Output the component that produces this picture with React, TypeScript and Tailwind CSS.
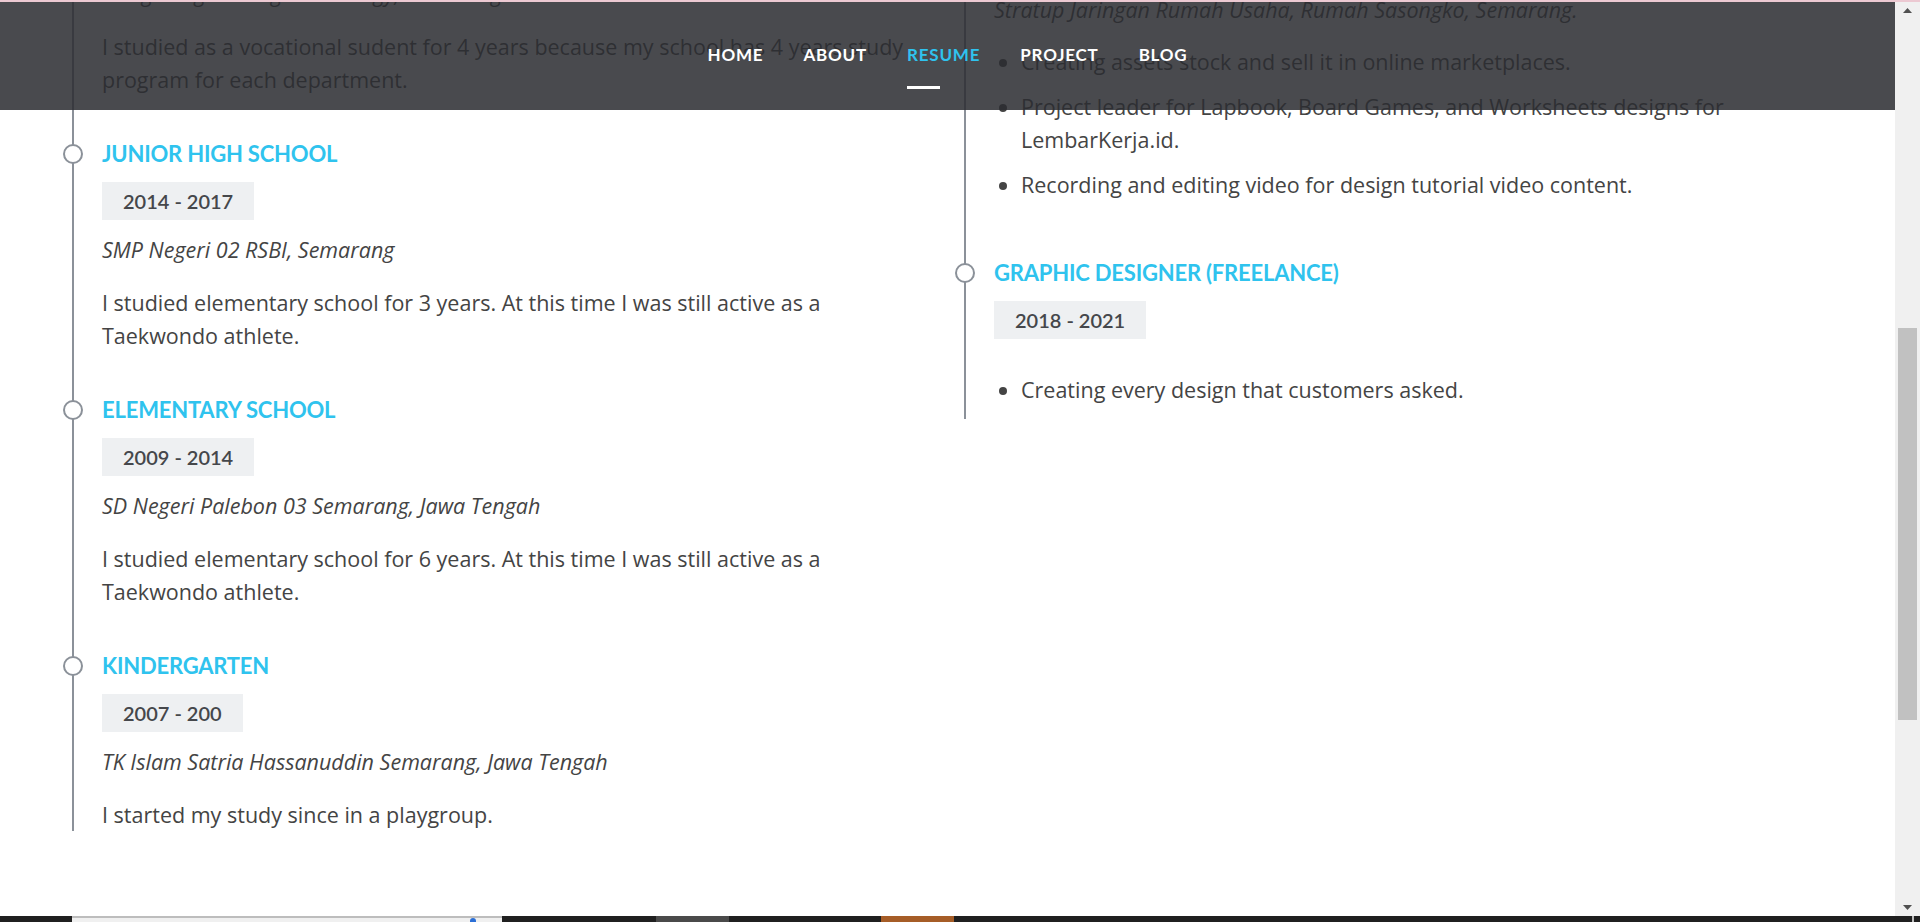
import type { JSX } from 'react';

// Resume timeline page, scrolled part-way, with the translucent fixed header on top.

const BODY_FONT = 'font-["Open_Sans","Liberation_Sans",sans-serif]';

type Item = {
  title: string;
  years: string;
  place: string;
  text: string;
};

const EDUCATION: Item[] = [
  {
    title: 'Junior High School',
    years: '2014 - 2017',
    place: 'SMP Negeri 02 RSBI, Semarang',
    text: 'I studied elementary school for 3 years. At this time I was still active as a Taekwondo athlete.',
  },
  {
    title: 'Elementary School',
    years: '2009 - 2014',
    place: 'SD Negeri Palebon 03 Semarang, Jawa Tengah',
    text: 'I studied elementary school for 6 years. At this time I was still active as a Taekwondo athlete.',
  },
  {
    title: 'Kindergarten',
    years: '2007 - 200',
    place: 'TK Islam Satria Hassanuddin Semarang, Jawa Tengah',
    text: 'I started my study since in a playgroup.',
  },
];

const NAV = ['Home', 'About', 'Resume', 'Project', 'Blog'];

function Dot(): JSX.Element {
  return (
    <span
      aria-hidden="true"
      className="absolute -left-[11px] top-[2px] w-[20px] h-[20px] rounded-full bg-white border-2 border-[#8b9199]"
    />
  );
}

function Heading({ children }: { children: string }): JSX.Element {
  return (
    <h4 className='font-["Lato","Liberation_Sans",sans-serif] text-[22px] leading-[24px] font-bold uppercase tracking-[-0.2px] text-[#2fc3ee]'>
      {children}
    </h4>
  );
}

function Years({ children }: { children: string }): JSX.Element {
  return (
    <div className='inline-block mt-[16px] px-[21px] py-[5px] bg-[#eef0f2] font-["Lato","Liberation_Sans",sans-serif] text-[20px] leading-[28px] font-semibold text-[#45474b]'>
      {children}
    </div>
  );
}

function EduItem({ item, last }: { item: Item; last: boolean }): JSX.Element {
  return (
    <div className={`relative border-l-2 border-[#8b9199] pl-[28px] ${last ? '' : 'pb-[46px]'}`}>
      <Dot />
      <Heading>{item.title}</Heading>
      <Years>{item.years}</Years>
      <p className="mt-[13px] italic leading-[33px]">{item.place}</p>
      <p className="mt-[20px] leading-[33px]">{item.text}</p>
    </div>
  );
}

function Education(): JSX.Element {
  return (
    <div className="w-[892px] px-[24px] -mt-[25px]">
      {/* tail of the vocational school item, scrolled mostly out of view */}
      <div className="relative border-l-2 border-[#8b9199] pl-[28px] pb-[46px]">
        <p className="italic leading-[33px]">Design Engineering Technology, Semarang</p>
        <p className="mt-[20px] leading-[33px]">
          I studied as a vocational sudent for 4 years because my school has 4 years study program for each department.
        </p>
      </div>
      {EDUCATION.map((item, i) => (
        <EduItem key={item.title} item={item} last={i === EDUCATION.length - 1} />
      ))}
    </div>
  );
}

function Experience(): JSX.Element {
  return (
    <div className="w-[892px] px-[24px] -mt-[9px]">
      <div className="relative border-l-2 border-[#8b9199] pl-[28px] pb-[48px]">
        <p className="italic leading-[33px]">Stratup Jaringan Rumah Usaha, Rumah Sasongko, Semarang.</p>
        <ul className="mt-[19px] pl-[27px] list-disc">
          <li className="leading-[33px] mb-[12px]">Creating assets stock and sell it in online marketplaces.</li>
          <li className="leading-[33px] mb-[12px]">
            Project leader for Lapbook, Board Games, and Worksheets designs for LembarKerja.id.
          </li>
          <li className="leading-[33px] mb-[12px]">Recording and editing video for design tutorial video content.</li>
        </ul>
      </div>
      <div className="relative border-l-2 border-[#8b9199] pl-[28px] pb-[1px]">
        <Dot />
        <Heading>Graphic Designer (Freelance)</Heading>
        <Years>2018 - 2021</Years>
        <ul className="mt-[34px] pl-[27px] list-disc">
          <li className="leading-[33px] mb-[12px]">Creating every design that customers asked.</li>
        </ul>
      </div>
    </div>
  );
}

function Header(): JSX.Element {
  return (
    <header className="absolute top-0 left-0 right-0 h-[108px] bg-[rgba(43,44,49,0.86)] flex items-center justify-center">
      <nav className='flex gap-[40px] pb-[2px] font-["Lato","Liberation_Sans",sans-serif] text-[17px] leading-[20px] font-bold uppercase tracking-[0.8px]'>
        {NAV.map((label) => (
          <a key={label} href="#" className={`relative ${label === 'Resume' ? 'text-[#2fc3ee]' : 'text-white'}`}>
            {label}
            {label === 'Resume' && <span className="absolute left-0 top-[41px] w-[33px] h-[3px] bg-white" />}
          </a>
        ))}
      </nav>
    </header>
  );
}

function Arrow({ down }: { down?: boolean }): JSX.Element {
  return (
    <div className="h-[17px] flex items-center justify-center">
      <svg width="9" height="5" viewBox="0 0 9 5" aria-hidden="true">
        <polygon points={down ? '0,0 9,0 4.5,5' : '0,5 9,5 4.5,0'} fill="#505050" />
      </svg>
    </div>
  );
}

function Scrollbar(): JSX.Element {
  return (
    <div className="w-[25px] bg-[#f0f0f0] flex flex-col">
      <Arrow />
      <div className="mt-[309px] mx-[3px] h-[392px] bg-[#c1c1c1]" />
      <div className="flex-1" />
      <Arrow down />
    </div>
  );
}

function Taskbar(): JSX.Element {
  return (
    <div className="h-[6px] bg-[#202020] flex">
      <div className="ml-[72px] w-[430px] bg-[#f0f0f0] border-t-2 border-[#bdbdbd] flex justify-end pr-[26px]">
        <span className="w-[6px] h-[4px] rounded-t-full bg-[#2b6fd6]" />
      </div>
      <div className="ml-[154px] w-[73px] bg-[#4a4a4a]" />
      <div className="ml-[152px] w-[73px] bg-[#a65d27]" />
      <div className="flex-1" />
      <div className="w-[2px] bg-[#bdbdbd] mr-[6px]" />
    </div>
  );
}

export default function App(): JSX.Element {
  return (
    <div className={`w-[1920px] h-[922px] overflow-hidden bg-white flex flex-col ${BODY_FONT} text-[21.5px] text-[#444]`}>
      <div className="h-[2px] bg-[#ecc9d2]" />
      <div className="h-[914px] flex">
        <main className="relative flex-1 overflow-hidden">
          <div className="flex pl-[48px]">
            <Education />
            <Experience />
          </div>
          <Header />
        </main>
        <Scrollbar />
      </div>
      <Taskbar />
    </div>
  );
}
